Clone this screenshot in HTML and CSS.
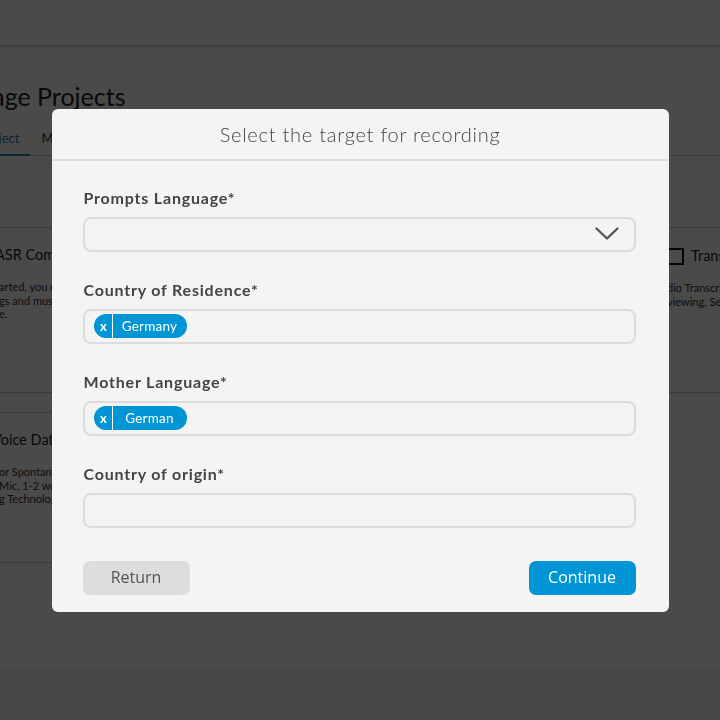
FILE: index.html
```html
<!DOCTYPE html>
<html lang="en">
<head>
<meta charset="utf-8">
<title>Select the target for recording</title>
<link rel="stylesheet" href="styles.css">
</head>
<body>
<div class="page">
  <header class="topbar"></header>
  <main class="content">
    <h1 class="page-title">Manage Projects</h1>
    <nav class="tabs">
      <span class="tab tab-active">Project</span>
      <span class="tab">My Tasks</span>
    </nav>
    <section class="cards">
      <div class="col">
        <article class="card card-tall">
          <h2 class="card-title">ASR Compliance Recording</h2>
          <p class="card-line">arted, you can record the assigned prompts</p>
          <p class="card-line">gs and must be completed before the deadline</p>
          <p class="card-line">e.</p>
        </article>
        <article class="card card-short">
          <h2 class="card-title">Voice Data Collection</h2>
          <p class="card-line">or Spontaneous Speech Recording</p>
          <p class="card-line">Mic, 1-2 words per prompt</p>
          <p class="card-line">g Technology</p>
        </article>
      </div>
      <div class="col col-right">
        <article class="card card-tall">
          <div class="card-check"><span class="checkbox"></span><h2 class="card-title">Transcription</h2></div>
          <p class="card-line">dio Transcription</p>
          <p class="card-line">viewing, Segmentation</p>
        </article>
      </div>
    </section>
  </main>
</div>

<div class="overlay">
  <div class="modal" role="dialog" aria-labelledby="modal-title">
    <div class="modal-header">
      <h2 id="modal-title" class="modal-title">Select the target for recording</h2>
    </div>
    <form class="modal-body">
      <div class="field">
        <label class="field-label">Prompts Language*</label>
        <div class="input input-select">
          <svg class="chevron" width="24" height="14" viewBox="0 0 24 14"><path d="M1.5 1.5 L12 11.5 L22.5 1.5" fill="none" stroke="#555" stroke-width="2.4" stroke-linecap="round" stroke-linejoin="round"/></svg>
        </div>
      </div>
      <div class="field">
        <label class="field-label">Country of Residence*</label>
        <div class="input">
          <span class="tag"><span class="tag-x">x</span><span class="tag-text">Germany</span></span>
        </div>
      </div>
      <div class="field">
        <label class="field-label">Mother Language*</label>
        <div class="input">
          <span class="tag"><span class="tag-x">x</span><span class="tag-text">German</span></span>
        </div>
      </div>
      <div class="field">
        <label class="field-label">Country of origin*</label>
        <div class="input"></div>
      </div>
      <div class="actions">
        <button type="button" class="btn btn-return">Return</button>
        <button type="button" class="btn btn-continue">Continue</button>
      </div>
    </form>
  </div>
</div>
</body>
</html>
```

FILE: styles.css
```css
* { box-sizing: border-box; }

html, body {
  margin: 0;
  padding: 0;
  width: 720px;
  height: 720px;
  overflow: hidden;
}

body {
  background: #f4f4f4;
  font-family: "Lato", "Noto Sans", sans-serif;
  color: #333;
}

.page {
  background: #ffffff;
  height: 668px;
  overflow: hidden;
}

.topbar {
  height: 45px;
  background: #ffffff;
  box-shadow: 0 1px 3px rgba(0, 0, 0, 0.35);
  position: relative;
}

.content {
  margin-left: -57px;
  width: 1000px;
}

.page-title {
  margin: 35px 0 0 0;
  padding-left: 0;
  font-size: 25px;
  line-height: 32px;
  font-weight: 400;
  color: #222;
}

.tabs {
  margin-top: 10px;
  height: 34px;
  border-bottom: 1px solid #cfcfcf;
  display: flex;
  padding-left: 25px;
  align-items: center;
  font-size: 13px;
}

.tab {
  height: 34px;
  line-height: 32px;
  padding: 0 11px;
  color: #333;
}

.tab-active {
  color: #1f7fa8;
  border-bottom: 2px solid #1f7fa8;
}

.cards {
  margin-top: 71px;
  display: grid;
  grid-template-columns: 707px 300px;
}

.col {
  display: flex;
  flex-direction: column;
  gap: 19px;
}

.card {
  border-top: 1px solid #c4c4c4;
  border-bottom: 1px solid #c4c4c4;
  padding: 17px 0 0 52px;
}

.card-short .card-title {
  margin-left: -3px;
}

.col .card-line {
  padding-left: 4px;
}

.col-right .card {
  padding-left: 17px;
  padding-top: 18px;
}

.col-right .card-line {
  padding-left: 0;
}

.card-tall { height: 166px; }
.card-short { height: 151px; }

.card-title {
  margin: 0 0 15px 0;
  font-size: 14.5px;
  line-height: 20px;
  font-weight: 400;
  color: #222;
}

.card-line {
  margin: 0;
  font-size: 11px;
  line-height: 13.5px;
  color: #333;
}

.card-check {
  display: flex;
  align-items: center;
  gap: 7px;
  height: 20px;
  margin-bottom: 15px;
}

.checkbox {
  width: 17px;
  height: 17px;
  border: 2px solid #111;
  display: inline-block;
}

.card-check .card-title { margin: 0; }

.overlay {
  position: fixed;
  inset: 0;
  background: rgba(0, 0, 0, 0.71);
  display: flex;
  align-items: center;
  justify-content: center;
}

.modal {
  width: 617px;
  background: #f4f4f4;
  border-radius: 6px;
  overflow: hidden;
}

.modal-header {
  height: 52px;
  border-bottom: 2px solid #dcdcdc;
  display: flex;
  align-items: center;
  justify-content: center;
  padding-top: 1px;
}

.modal-title {
  margin: 0;
  font-size: 20px;
  font-weight: 300;
  color: #444;
  letter-spacing: 0.75px;
}

.modal-body {
  padding: 27px 33px 17px 31px;
  margin: 0;
}

.field {
  margin-bottom: 28px;
}

.field-label {
  display: block;
  font-size: 16px;
  line-height: 20px;
  font-weight: 700;
  color: #444;
  margin-bottom: 9px;
  padding-left: 1px;
  letter-spacing: 0.8px;
}

.input {
  height: 35px;
  border: 2px solid #dcdcdc;
  border-radius: 8px;
  background: #f4f4f4;
  padding: 4px 9px;
  display: flex;
  align-items: center;
}

.input-select {
  justify-content: flex-end;
  padding-right: 15px;
}

.chevron {
  display: block;
}

.tag {
  display: inline-flex;
  height: 24px;
  background: #0096d6;
  border-radius: 12px;
  color: #fff;
  font-size: 13.5px;
  align-items: stretch;
}

.tag-x {
  width: 19px;
  border-right: 1px solid #fff;
  display: flex;
  align-items: center;
  justify-content: center;
  font-weight: 700;
  font-size: 13px;
  padding-left: 2px;
}

.tag-text {
  width: 74px;
  display: flex;
  align-items: center;
  justify-content: center;
  letter-spacing: 0.2px;
}

.actions {
  margin-top: 33px;
  display: flex;
  justify-content: space-between;
}

.btn {
  width: 107px;
  height: 34px;
  border: none;
  border-radius: 7px;
  font-family: "Open Sans", "Noto Sans", sans-serif;
  font-size: 16px;
  padding: 0 0 1px 0;
  cursor: pointer;
}

.btn-return {
  background: #dddddd;
  color: #555;
}

.btn-continue {
  background: #0096d6;
  color: #fff;
}
```
